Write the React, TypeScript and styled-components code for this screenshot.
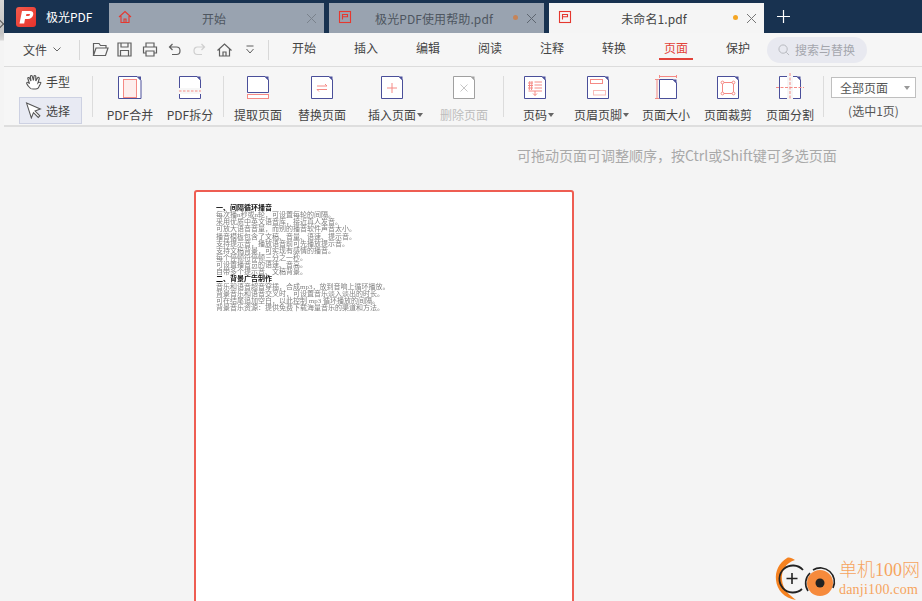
import React from "react";
import styled, { createGlobalStyle } from "styled-components";

const Global = createGlobalStyle`
  html, body { margin: 0; padding: 0; height: 100%; background: #f5f5f5; overflow: hidden; }
  #root { height: 100%; }
  * { box-sizing: border-box; }
`;

const Shell = styled.div`
  width: 922px; height: 601px; overflow: hidden; display: flex;
  font-family: "Noto Sans CJK SC", "Liberation Sans", sans-serif; color: #444;
`;
const Edge = styled.div`
  width: 4px; flex: none; position: relative;
  background: linear-gradient(#d6d6d6 0, #c4c4c4 33px, #d8d8d8 40px, #f4f4f4 41px);
  &::after {
    content: ""; position: absolute; left: -3px; top: 21px; width: 5px; height: 5px;
    border-top: 1px solid #555; border-right: 1px solid #555; transform: rotate(45deg);
  }
`;
const Main = styled.div`
  flex: 1; min-width: 0; display: flex; flex-direction: column; background: #f4f4f4;
`;

const TitleBar = styled.div`
  height: 33px; flex: none; background: #183250; display: flex; align-items: flex-end;
`;
const Brand = styled.div`
  width: 105px; height: 33px; flex: none; display: flex; align-items: center; padding-left: 12px; gap: 10px;
  color: #fff; font-size: 12px;
`;
const LogoBox = styled.div`
  width: 20px; height: 20px; border-radius: 3px; background: linear-gradient(135deg,#f25a4b,#e8322c);
  display: flex; align-items: center; justify-content: center;
`;
const Tab = styled.div<{ $active?: boolean }>`
  width: 215px; height: 30px; flex: none; margin-right: 5px; display: flex; align-items: center; position: relative;
  background: ${p => (p.$active ? "#f5f5f5" : "#99a3b0")};
  color: ${p => (p.$active ? "#444" : "#4e5660")};
  font-size: 12px;
`;
const TabIcon = styled.div`
  position: absolute; left: 9px; top: 7px; width: 14px; height: 14px;
`;
const TabTitle = styled.div`
  flex: 1; text-align: center; padding-right: 5px; letter-spacing: 0.1px; white-space: nowrap;
`;
const TabDot = styled.span<{ $dim?: boolean }>`
  position: absolute; right: 26px; top: 12px; width: 5px; height: 5px; border-radius: 50%;
  background: ${p => (p.$dim ? "#c68458" : "#f5a623")};
`;
const TabClose = styled.svg`
  position: absolute; right: 8px; top: 11px; width: 9px; height: 9px;
`;
const PlusBox = styled.svg`
  width: 13px; height: 13px; margin: 0 0 10px 8px; flex: none;
`;

const MenuBar = styled.div`
  height: 34px; flex: none; display: flex; align-items: center; border-bottom: 1px solid #dcdcdc;
  background: #f6f6f6; font-size: 12px; position: relative;
`;
const FileMenu = styled.div`
  width: 76px; flex: none; display: flex; align-items: center; padding-left: 19px; gap: 6px; height: 20px;
  border-right: 1px solid #d8d8d8; color: #444;
`;
const QuickIcons = styled.div`
  width: 189px; flex: none; height: 20px; display: flex; align-items: center; padding-left: 12px; gap: 0;
  border-right: 1px solid #d8d8d8;
`;
const QuickSlot = styled.div<{ $w: number }>`
  width: ${p => p.$w}px; flex: none; display: flex; align-items: center;
`;
const MenuItems = styled.div`
  display: flex; align-items: center; height: 33px; padding-left: 4px;
`;
const MenuItem = styled.div<{ $active?: boolean }>`
  width: 62px; height: 33px; line-height: 29px; text-align: center; flex: none; position: relative;
  color: ${p => (p.$active ? "#e2423a" : "#444")};
  ${p => p.$active ? `&::after { content: ""; position: absolute; left: 14px; right: 14px; bottom: 6px; height: 2px; background: #e2423a; }` : ""}
`;
const Search = styled.div`
  width: 100px; height: 26px; border-radius: 13px; background: #e8e9f0; color: #a4a6ad; margin-left: -2px;
  display: flex; align-items: center; padding-left: 11px; gap: 5px; font-size: 12px; flex: none;
`;

const Toolbar = styled.div`
  height: 60px; flex: none; display: flex; align-items: stretch; background: #f6f6f6;
  border-bottom: 2px solid #dedede; color: #444;
`;
const HandCol = styled.div`
  width: 88px; flex: none; display: flex; flex-direction: column; padding: 1px 0 0 15px; gap: 2px;
`;
const ModeBtn = styled.div<{ $on?: boolean }>`
  width: 63px; height: 27px; display: flex; align-items: center; gap: 3px; padding-left: 5px; font-size: 12px;
  border: 1px solid ${p => (p.$on ? "#cdd1e2" : "transparent")};
  background: ${p => (p.$on ? "#e8eaf3" : "transparent")};
`;
const Divider = styled.div`
  width: 1px; flex: none; background: #dcdcdc; margin: 9px 0 8px;
`;
const ToolGroup = styled.div<{ $w: number; $pl?: number }>`
  display: flex; flex: none; width: ${p => p.$w}px; padding-left: ${p => p.$pl ?? 0}px;
`;
const Tool = styled.div<{ $w: number; $off?: boolean }>`
  width: ${p => p.$w}px; flex: none; display: flex; flex-direction: column; align-items: center; padding-top: 8px;
  font-size: 12px; color: ${p => (p.$off ? "#bdbdbd" : "#444")}; white-space: nowrap;
`;
const ToolIcon = styled.svg`
  width: 34px; height: 28px; display: block; overflow: visible;
`;
const ToolLabel = styled.div`
  margin-top: 3px; line-height: 17px; position: relative;
`;
const Caret = styled.span`
  position: absolute; left: 100%; top: 7px; width: 0; height: 0; margin-left: 1px;
  border-left: 3.5px solid transparent; border-right: 3.5px solid transparent; border-top: 4px solid #666;
`;
const RangeCol = styled.div`
  width: 98px; flex: none; display: flex; flex-direction: column; align-items: center; padding: 10px 0 0 1px; font-size: 12px;
`;
const RangeSelect = styled.div`
  width: 85px; height: 21px; background: #fff; border: 1px solid #bfbfbf; display: flex; align-items: center;
  justify-content: space-between; padding: 0 5px 0 8px; color: #555; font-size: 12px;
`;
const RangeCaret = styled.span`
  width: 0; height: 0; border-left: 3.5px solid transparent; border-right: 3.5px solid transparent; border-top: 4px solid #999;
`;
const RangeNote = styled.div`
  margin-top: 4px; color: #555; line-height: 17px;
`;

const Canvas = styled.div`
  flex: 1; min-height: 0; background: #f4f4f4; position: relative; overflow: hidden; padding: 63px 0 0 190px;
`;
const Hint = styled.div`
  position: absolute; left: 513px; top: 18px; font-size: 14px; line-height: 20px; color: #a9a9a9; white-space: nowrap;
`;
const Paper = styled.div`
  width: 380px; height: 440px; background: #fff; border: 2px solid #ee5d52; border-radius: 3px; padding: 13px 0 0 20px;
`;
const Doc = styled.div`
  font-family: "Liberation Serif", "Noto Sans CJK SC", serif; font-size: 7px; line-height: 7.14px; color: #808080;
  filter: blur(0.25px); white-space: nowrap;
`;
const DocHead = styled.div`
  color: #111; font-weight: 700;
`;

const Watermark = styled.div`
  position: absolute; right: 2px; bottom: 0; display: flex; align-items: flex-end; gap: 2px;
`;
const WmText = styled.div`
  display: flex; flex-direction: column; gap: 1px; padding-bottom: 3px; color: #f6a45e;
  font-family: "Liberation Serif", "Noto Sans CJK SC", serif;
`;
const WmTop = styled.div`
  font-size: 18px; line-height: 21px; font-weight: 300; white-space: nowrap;
`;
const WmBottom = styled.div`
  font-size: 14px; line-height: 16px; letter-spacing: 0.2px;
`;

const Ink = "#4a4f9a";
const Pink = "#f58a85";

const Doc0 = ({ off }: { off?: boolean }) => (
  <path d="M5.5 1.5H23L26.5 5V23.5H5.5Z" fill="#fff" stroke={off ? "#a0a0a0" : Ink} strokeWidth="1" />
);
const Corner = ({ off }: { off?: boolean }) => (
  <path d="M22.5 1.5L26.5 1.5L26.5 5.5Z" fill={off ? "#a0a0a0" : Ink} />
);

const ic = { stroke: "#5f5f5f", fill: "none", strokeWidth: 1.2 } as const;

const tools1 = [
  {
    label: "PDF合并", w: 60, icon: (
      <>
        <path d="M4.5 1.5H23L27 5.5V23.5H4.5Z" fill="#fff" stroke={Ink} />
        <path d="M23 1.5L27 1.5L27 5.5Z" fill={Ink} />
        <rect x="9.5" y="4.5" width="13" height="18" fill="#fdeeed" stroke={Pink} />
      </>
    )
  },
  {
    label: "PDF拆分", w: 60, icon: (
      <>
        <path d="M5.5 13V1.5H23L26.5 5V13M5.5 19V23.5H26.5V19" fill="#fff" stroke={Ink} />
        <path d="M22.5 1.5L26.5 1.5L26.5 5.5Z" fill={Ink} />
        <path d="M5 16H27" stroke={Pink} strokeDasharray="2.5 1.5" />
      </>
    )
  }
];
const tools2 = [
  {
    label: "提取页面", w: 68, icon: (
      <>
        <path d="M5.5 1.5H23L26.5 5V17.5H5.5Z" fill="#fff" stroke={Ink} />
        <path d="M22.5 1.5L26.5 1.5L26.5 5.5Z" fill={Ink} />
        <rect x="5.5" y="19.5" width="21" height="4" fill="#fff" stroke={Pink} />
      </>
    )
  },
  {
    label: "替换页面", w: 60, icon: (
      <>
        <Doc0 /><Corner />
        <path d="M11 11H21L19 9M21 14.5H11L13 16.5" fill="none" stroke={Pink} />
      </>
    )
  },
  {
    label: "插入页面", w: 80, caret: true, icon: (
      <>
        <Doc0 /><Corner />
        <path d="M16 8V18M11 13H21" fill="none" stroke={Pink} />
      </>
    )
  },
  {
    label: "删除页面", w: 64, off: true, icon: (
      <>
        <Doc0 off /><Corner off />
        <path d="M12.5 9.5L19.5 16.5M19.5 9.5L12.5 16.5" fill="none" stroke="#c6c6c6" />
      </>
    )
  }
];
const tools3 = [
  {
    label: "页码", w: 62, caret: true, icon: (
      <>
        <Doc0 /><Corner />
        <path d="M9 8H14M9 10.5H14M9 13H14M10.8 6L10.3 15M13 6L12.5 15M15.5 7H23M15.5 10H23M15.5 13H23M9.5 16H23M16 16V20.5M14 18.5L16 20.5L18 18.5" fill="none" stroke={Pink} />
      </>
    )
  },
  {
    label: "页眉页脚", w: 64, caret: true, icon: (
      <>
        <Doc0 /><Corner />
        <rect x="8.5" y="4.5" width="12" height="4" fill="#fff" stroke={Pink} />
        <rect x="11.5" y="15.5" width="12" height="4.5" fill="#fff" stroke="#f9bcb9" />
      </>
    )
  },
  {
    label: "页面大小", w: 72, icon: (
      <>
        <path d="M9.5 4.5H23L26.5 8V23.5H9.5Z" fill="#fff" stroke={Ink} />
        <path d="M22.5 4.5L26.5 4.5L26.5 8.5Z" fill={Ink} />
        <path d="M9.5 1.5H26.5M9.5 0V3M26.5 0V3M7 4.5V23.5M5 4.5H9M5 23.5H9" fill="none" stroke={Pink} />
      </>
    )
  },
  {
    label: "页面裁剪", w: 52, icon: (
      <>
        <Doc0 /><Corner />
        <rect x="10.5" y="7.5" width="11" height="11" fill="none" stroke={Pink} />
        <circle cx="10.5" cy="7.5" r="1.4" fill="#fff" stroke={Pink} /><circle cx="21.5" cy="7.5" r="1.4" fill="#fff" stroke={Pink} />
        <circle cx="10.5" cy="18.5" r="1.4" fill="#fff" stroke={Pink} /><circle cx="21.5" cy="18.5" r="1.4" fill="#fff" stroke={Pink} />
      </>
    )
  },
  {
    label: "页面分割", w: 72, icon: (
      <>
        <path d="M13 1.5H5.5V23.5H13M19 23.5H26.5V5L23 1.5H19" fill="#fff" stroke={Ink} />
        <path d="M22.5 1.5L26.5 1.5L26.5 5.5Z" fill={Ink} />
        <path d="M16 -2V25M2 12.5H30" fill="none" stroke={Pink} strokeDasharray="3 1.5" />
      </>
    )
  }
];

type T = { label: string; w: number; icon: React.ReactNode; caret?: boolean; off?: boolean };
const renderTool = (t: T) => (
  <Tool key={t.label} $w={t.w} $off={t.off}>
    <ToolIcon viewBox="-1 0 34 28">{t.icon}</ToolIcon>
    <ToolLabel>{t.label}{t.caret && <Caret />}</ToolLabel>
  </Tool>
);

const X = ({ c }: { c: string }) => (
  <TabClose viewBox="0 0 9 9"><path d="M0 0L9 9M9 0L0 9" stroke={c} strokeWidth="1" fill="none" /></TabClose>
);
const PdfMark = () => (
  <svg viewBox="0 0 14 14" width="14" height="14">
    <rect x="1.5" y="1.5" width="11" height="11" fill="none" stroke="#e5382f" strokeWidth="1.1" />
    <path d="M4.5 9.5V4.5H9.5V6.8H4.5" fill="none" stroke="#e5382f" strokeWidth="1.1" />
  </svg>
);

const lines1 = [
  "每次播n秒或n轮，可设置每轮的间隔。",
  "采用优质中英文语音库，接近真人发音。",
  "可放大语音音量，而别的播音软件声音太小。",
  "播音模板包含了文稿、音量、语速、提示音。",
  "支持提示音，播放语音前可先播放提示音。",
  "支持文稿背景，可实现有感情的播音。",
  "每个停顿符停顿三分之一秒。",
  "可设置播音员的语速、音高。",
  "自带多个提示音、文稿背景。"
];
const lines2 = [
  "音乐和语音超音穿插，合成mp3，放到音响上循环播放。",
  "背景音乐和语音交叉时，可设置音乐淡入淡出的时长。",
  "可在结尾追加空白，以此控制 mp3 循环播放的间隔。",
  "背景音乐资源：提供免费下载海量音乐的渠道和方法。"
];

export default function App() {
  return (
    <Shell>
      <Global />
      <Edge />
      <Main>
        <TitleBar>
          <Brand>
            <LogoBox>
              <svg viewBox="0 0 20 20" width="20" height="20">
                <path d="M3.5 16.5L6 4H14C16.5 4 17.7 5.6 17.2 7.8C16.7 10.4 14.6 12 12 12H9L8.2 16.5ZM10 8.9H12.4C13.3 8.9 13.9 8.4 14 7.8C14.1 7.2 13.7 6.9 13 6.9H10.4Z" fill="#fff" fillRule="evenodd" />
              </svg>
            </LogoBox>
            极光PDF
          </Brand>
          <Tab>
            <TabIcon>
              <svg viewBox="0 0 14 14" width="14" height="14">
                <path d="M1 7L7 1.5L13 7M3 6V12.5H11V6M6 12.5V9H8V12.5" fill="none" stroke="#e5382f" strokeWidth="1.1" />
              </svg>
            </TabIcon>
            <TabTitle>开始</TabTitle>
            <X c="#7a828c" />
          </Tab>
          <Tab>
            <TabIcon><PdfMark /></TabIcon>
            <TabTitle>极光PDF使用帮助.pdf</TabTitle>
            <TabDot $dim />
            <X c="#5e6670" />
          </Tab>
          <Tab $active>
            <TabIcon><PdfMark /></TabIcon>
            <TabTitle>未命名1.pdf</TabTitle>
            <TabDot />
            <X c="#777" />
          </Tab>
          <PlusBox viewBox="0 0 13 13"><path d="M6.5 0V13M0 6.5H13" stroke="#fff" strokeWidth="1.2" fill="none" /></PlusBox>
        </TitleBar>

        <MenuBar>
          <FileMenu>
            文件
            <svg viewBox="0 0 8 5" width="8" height="5"><path d="M.5.5L4 4L7.5.5" fill="none" stroke="#666" /></svg>
          </FileMenu>
          <QuickIcons>
            <QuickSlot $w={25}>
              <svg width="17" height="16" viewBox="0 0 17 16"><path d="M1.5 13.5V1.5H7L8.5 3.5H14V6M1.5 13.5H13.5L16 6H4L1.5 13.5Z" {...ic} /></svg>
            </QuickSlot>
            <QuickSlot $w={25}>
              <svg width="15" height="15" viewBox="0 0 15 15"><path d="M1 1H14V14H1ZM4 1V5H11V1M3.5 14V8.5H11.5V14" {...ic} /></svg>
            </QuickSlot>
            <QuickSlot $w={26}>
              <svg width="16" height="15" viewBox="0 0 16 15"><path d="M4 5V1H12V5M4 11H1.5V5H14.5V11H12M4 9H12V14H4Z" {...ic} /></svg>
            </QuickSlot>
            <QuickSlot $w={25}>
              <svg width="13" height="13" viewBox="0 0 13 13"><path d="M4.5 1L1.5 4L4.5 7M1.5 4H8.5C10.5 4 12 5.5 12 7.7C12 10 10.5 11.5 8.5 11.5H4" {...ic} /></svg>
            </QuickSlot>
            <QuickSlot $w={24}>
              <svg width="13" height="13" viewBox="0 0 13 13"><path d="M8.5 1L11.5 4L8.5 7M11.5 4H4.5C2.5 4 1 5.5 1 7.7C1 10 2.5 11.5 4.5 11.5H9" {...ic} stroke="#cfcfcf" /></svg>
            </QuickSlot>
            <QuickSlot $w={29}>
              <svg width="15" height="14" viewBox="0 0 15 14"><path d="M.5 7.5L7.5 1L14.5 7.5M2.5 6V13H12.5V6M6 13V9H9V13" {...ic} /></svg>
            </QuickSlot>
            <QuickSlot $w={9}>
              <svg width="8" height="9" viewBox="0 0 8 9"><path d="M.5 1H7.5M.5 4L4 8L7.5 4" {...ic} strokeWidth="1" /></svg>
            </QuickSlot>
          </QuickIcons>
          <MenuItems>
            {["开始", "插入", "编辑", "阅读", "注释", "转换"].map(m => <MenuItem key={m}>{m}</MenuItem>)}
            <MenuItem $active>页面</MenuItem>
            <MenuItem>保护</MenuItem>
          </MenuItems>
          <Search>
            <svg width="12" height="12" viewBox="0 0 13 13"><circle cx="5.5" cy="5.5" r="4.5" fill="none" stroke="#b3b5bb" /><path d="M9 9L12 12" stroke="#b3b5bb" /></svg>
            搜索与替换
          </Search>
        </MenuBar>

        <Toolbar>
          <HandCol>
            <ModeBtn>
              <svg width="18" height="16" viewBox="0 0 16 16" preserveAspectRatio="none"><path d="M5 14.5C3.5 13 2 11 1.5 9.5C1.2 8.5 2.2 8 3 8.7L4 9.7L2.5 4.5C2.2 3.4 3.6 3 4 4L5.3 7L4.8 2.5C4.7 1.4 6.2 1.2 6.5 2.3L7.5 6.5L8 2.2C8.1 1.2 9.6 1.3 9.6 2.4L9.6 7L11.2 3.8C11.7 3 13 3.5 12.7 4.5L11.5 9C12 8.5 13 8 14 8.5C14.8 9 13 10.5 12.5 12.5C12 14.5 11 15 9.5 15C8 15 6 15.4 5 14.5Z" fill="#fff" stroke="#555" strokeWidth="1" /></svg>
              手型
            </ModeBtn>
            <ModeBtn $on>
              <svg width="18" height="17" viewBox="0 0 16 16"><path d="M1 1L14 6.5L9 8.5L13.5 13L12 14.5L7.5 10L5.5 15Z" fill="#fff" stroke="#555" strokeWidth="1" /></svg>
              选择
            </ModeBtn>
          </HandCol>
          <Divider />
          <ToolGroup $w={130} $pl={7}>{tools1.map(renderTool)}</ToolGroup>
          <Divider />
          <ToolGroup $w={279}>{tools2.map(renderTool)}</ToolGroup>
          <Divider />
          <ToolGroup $w={319}>{tools3.map(renderTool)}</ToolGroup>
          <Divider />
          <RangeCol>
            <RangeSelect>全部页面<RangeCaret /></RangeSelect>
            <RangeNote>(选中1页)</RangeNote>
          </RangeCol>
        </Toolbar>

        <Canvas>
          <Hint>可拖动页面可调整顺序，按Ctrl或Shift键可多选页面</Hint>
          <Paper>
            <Doc>
              <DocHead>一、间隔循环播音</DocHead>
              {lines1.map(l => <div key={l}>{l}</div>)}
              <DocHead>二、背景广告制作</DocHead>
              {lines2.map(l => <div key={l}>{l}</div>)}
            </Doc>
          </Paper>
          <Watermark>
            <svg width="62" height="46" viewBox="0 0 62 46">
              <path d="M12 3C4 8 0 16 1 25C2 35 9 43 21 45C13 39 8 34 7 25C6 15 11 8 20 5C17 3 14 2 12 3Z" fill="#f58220" />
              <path d="M27 34A13.5 13.5 0 1 1 28 15" fill="none" stroke="#222" strokeWidth="1.8" />
              <path d="M17 18V29M11.5 23.5H22.5" stroke="#222" strokeWidth="1.6" />
              <circle cx="45" cy="28" r="13" fill="#f68a3c" />
              <path d="M38 15A14 14 0 0 1 58 33M33 36A14 14 0 0 1 35 18" fill="none" stroke="#222" strokeWidth="1.6" />
              <circle cx="45" cy="28" r="4.5" fill="#222" />
            </svg>
            <WmText>
              <WmTop>单机100网</WmTop>
              <WmBottom>danji100.com</WmBottom>
            </WmText>
          </Watermark>
        </Canvas>
      </Main>
    </Shell>
  );
}
